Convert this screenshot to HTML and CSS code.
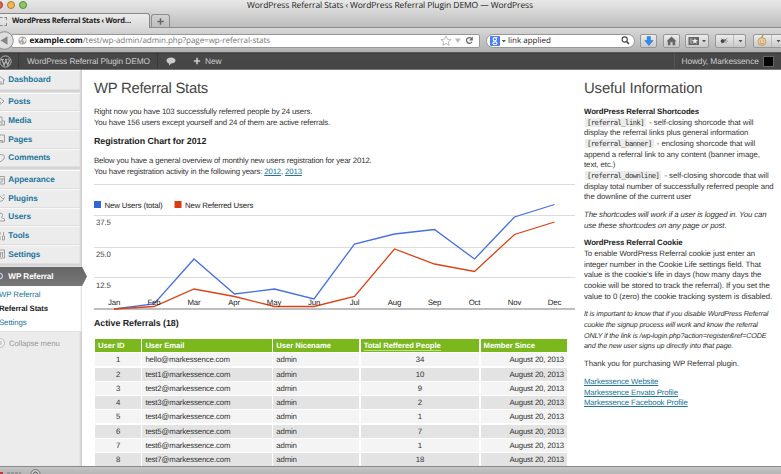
FILE: index.html
```html
<!DOCTYPE html>
<html lang="en">
<head>
<meta charset="utf-8">
<title>WordPress Referral Stats</title>
<link rel="stylesheet" href="styles.css">
</head>
<body>
<div class="window">
  <header class="titlebar">
    <div class="lights"><i class="red"></i><i class="amber"></i><i class="green"></i></div>
    <div class="wintitle"><span>WordPress Referral Stats ‹ WordPress Referral Plugin DEMO — WordPress</span></div>
    <div class="tabs">
      <div class="tab"><i class="favicon"></i><span>WordPress Referral Stats ‹ Word…</span></div>
      <div class="newtab"><svg width="7" height="7" viewBox="0 0 7 7"><path d="M3.5 .3v6.4M.3 3.5h6.4" stroke="#666" stroke-width="1.5"/></svg></div>
    </div>
  </header>
  <nav class="toolbar">
    <div class="back"><svg width="19" height="19" viewBox="0 0 19 19"><circle cx="9.5" cy="9.5" r="8.8" fill="#dedede" stroke="#8b8b8b"/><path d="M5.5 9.5l7-4.2v8.4z" fill="#858585"/></svg></div>
    <div class="url">
      <svg width="9" height="9" viewBox="0 0 9 9"><circle cx="4.5" cy="4.5" r="4.1" fill="#a9a9a9"/><path d="M1 3l2-1.6 1.4.8-1 1.5-.3 1.4-1-.5zM5 3.2l1.6-1.4L8 4 6.6 6.8 5.4 5zM2.5 6l1.6.2L3.8 8z" fill="#eee"/></svg>
      <span class="addr"><b>example.com</b>/test/wp-admin/admin.php?page=wp-referral-stats</span>
      <svg class="urlicons" width="36" height="11" viewBox="0 0 36 11"><path d="M6 .8l1.5 3.4 3.6.3-2.7 2.4.8 3.5L6 8.5l-3.2 1.9.8-3.5L.9 4.5l3.6-.3z" fill="#fff" stroke="#aaa" stroke-width=".8"/><path d="M14.8 3.5h6l-3 4.6z" fill="#bbb"/><path d="M31.3 3.2A2.9 2.9 0 1 0 32 6.8" fill="none" stroke="#666" stroke-width="1.3"/><path d="M32.8 1.6v3.8h-3.8z" fill="#666"/></svg>
    </div>
    <div class="search">
      <svg width="16" height="10" viewBox="0 0 16 10"><rect width="10" height="10" rx="1" fill="#4a7df0"/><ellipse cx="4.8" cy="3.2" rx="1.7" ry="1.6" fill="none" stroke="#fff" stroke-width="1.1"/><path d="M5 1.5h2.3M5 4.8l.9 1" stroke="#fff"/><ellipse cx="4.9" cy="7.3" rx="2.1" ry="1.4" fill="none" stroke="#fff" stroke-width="1.1"/><path d="M11.8 4h4l-2 2.4z" fill="#555"/></svg>
      <span>link applied</span>
      <svg class="lens" width="9" height="9" viewBox="0 0 9 9"><circle cx="3.7" cy="3.5" r="2.6" fill="none" stroke="#444" stroke-width="1.1"/><path d="M5.6 5.4l2.4 2.7" stroke="#444" stroke-width="1.5"/></svg>
    </div>
    <div class="btn b1"><svg width="10" height="10" viewBox="0 0 10 10"><path d="M3.2.6h3.2v4h2.7L4.9 9.4.7 4.6h2.5z" fill="#2f8cf2" stroke="#1c6dd0" stroke-width=".5"/></svg></div>
    <div class="btn b2"><svg width="11" height="10" viewBox="0 0 11 10"><path d="M5.5.6l5 4.6H9.2v4H6.6V6.3H4.4v2.9H1.8v-4H.5z" fill="#666"/></svg></div>
    <div class="btn b3"><svg width="19" height="10" viewBox="0 0 19 10"><rect x=".5" y="1" width="10.5" height="8" fill="#666"/><rect x="2" y="2.2" width="2.3" height="5.5" fill="#999"/><path d="M6.9 2l.9 2 2.1.1-1.6 1.4.5 2.2-1.9-1.2L5 7.7l.5-2.2L4 4.1 6 4z" fill="#eee"/><path d="M14 4h4l-2 2.4z" fill="#555"/></svg></div>
    <div class="btn b4"><svg width="30" height="12" viewBox="0 0 30 12"><path d="M4 6h8M5 3.5l3 2 3.5-2.5M5.5 9l2.5-2.5L11 8" stroke="#999" stroke-width=".8" fill="none"/><circle cx="6.7" cy="6.1" r="1.9" fill="#444"/><circle cx="9.3" cy="5" r="1.1" fill="#777"/><path d="M17.5 0v12" stroke="#b5b5b5" stroke-width=".8"/><path d="M22.5 5h4l-2 2.4z" fill="#555"/></svg></div>
    <div class="btn b5"><svg width="27" height="12" viewBox="0 0 27 12"><circle cx="8" cy="6.6" r="4" fill="#e8cf9d" stroke="#bb9960" stroke-width=".9"/><path d="M8 3V1l1.5-.5" stroke="#a58755" fill="none"/><path d="M6.5 5.5v1.2M9.5 5.5v1.2M6 8.2q2 1.3 4 0" stroke="#a48655" stroke-width=".7" fill="none"/><path d="M17.5 0v12" stroke="#b5b5b5" stroke-width=".8"/><path d="M22.5 5h4l-2 2.4z" fill="#555"/></svg></div>
  </nav>
  <div class="adminbar">
    <div class="wp"><svg width="13" height="13" viewBox="0 0 13 13"><circle cx="6.5" cy="6.5" r="5.6" fill="none" stroke="#b5b5b5"/><path d="M2 4.5h2.8M6 4.5h2.6M3 4.5l2.1 5.8 1.5-4.1M6.6 4.5l2.2 5.8 1.5-4.4q0-1.3-.8-2.2" fill="none" stroke="#b5b5b5" stroke-width="1.2"/></svg></div>
    <div class="site">WordPress Referral Plugin DEMO</div>
    <div class="bubble"><svg width="10" height="9" viewBox="0 0 10 9"><path d="M5 .4c2.6 0 4.5 1.3 4.5 3.1S7.6 6.6 5 6.6L3 8.8V6.4C1.5 6 .5 5 .5 3.5.5 1.7 2.4.4 5 .4z" fill="#ccc"/></svg></div>
    <div class="new"><svg width="8" height="8" viewBox="0 0 8 8"><path d="M4 .8v6.4M.8 4h6.4" stroke="#ccc" stroke-width="1.6"/></svg><span>New</span></div>
    <div class="howdy"><span>Howdy, Markessence</span><i></i></div>
  </div>
  <div class="body">
    <aside class="side">
      <div class="item dash"><svg width="6" height="10" viewBox="0 0 6 10"><path d="M-1 1l5.5 4H3.5v4H-1M1 9V6" class="ic"/></svg><span>Dashboard</span></div>
      <div class="sep"></div>
      <div class="item"><svg width="6" height="10" viewBox="0 0 6 10"><path d="M0 1l4 3-2.500 2.500L0 5M0 6v2" class="ic"/></svg><span>Posts</span></div>
      <div class="item"><svg width="6" height="10" viewBox="0 0 6 10"><path d="M-1 1h3v4h2.500v4H-1M0 6h2v3" class="ic"/></svg><span>Media</span></div>
      <div class="item"><svg width="6" height="10" viewBox="0 0 6 10"><path d="M-1 1h5.500v7H-1M0 6.500h2.500v2.500" class="ic"/></svg><span>Pages</span></div>
      <div class="item"><svg width="6" height="10" viewBox="0 0 6 10"><path d="M-1 1.500h2.500Q4.500 1.500 4.500 4T2 7.500L0 9" class="ic"/></svg><span>Comments</span></div>
      <div class="sep"></div>
      <div class="item"><svg width="6" height="10" viewBox="0 0 6 10"><path d="M-1 1.500h5.500v7.500H-1M0 4h4M2 4v3H0" class="ic"/></svg><span>Appearance</span></div>
      <div class="item"><svg width="6" height="10" viewBox="0 0 6 10"><path d="M4.500 1L2.500 3M5 4L3 6M0 3l3.500 3.500Q2 9 0 8" class="ic"/></svg><span>Plugins</span></div>
      <div class="item"><svg width="6" height="10" viewBox="0 0 6 10"><path d="M0 1Q3 1 2.500 3.500L1.500 5.500 4.500 7v2H-1" class="ic"/></svg><span>Users</span></div>
      <div class="item"><svg width="6" height="10" viewBox="0 0 6 10"><path d="M0 1v3M3.500 1v3.500M2.500 5h2v4h-2zM0 5v4" class="ic"/></svg><span>Tools</span></div>
      <div class="item"><svg width="6" height="10" viewBox="0 0 6 10"><path d="M-1 1h5.500v8H-1M.5 3v5M2.500 3v5M0 4h1.500M2 3.500h1.500" class="ic"/></svg><span>Settings</span></div>
      <div class="sep"></div>
      <div class="current"><svg width="6" height="10" viewBox="0 0 6 10"><circle cx="-.2" cy="5" r="2.600" fill="none" stroke="#c5cdf0" stroke-width="1.200"/></svg><span>WP Referral</span></div>
      <div class="sub"><a>WP Referral</a><b>Referral Stats</b><a>Settings</a></div>
      <div class="collapse"><svg width="6" height="12" viewBox="0 0 6 12"><circle cx="0" cy="6" r="4.500" fill="#f5f5f5" stroke="#bbb"/><path d="M1 4v4" stroke="#aaa"/></svg><span>Collapse menu</span></div>
    </aside>
    <main class="main">
      <h1>WP Referral Stats</h1>
      <p>Right now you have 103 successfully referred people by 24 users.<br>You have 156 users except yourself and 24 of them are active referrals.</p>
      <h2 class="h-chart">Registration Chart for 2012</h2>
      <p>Below you have a general overview of monthly new users registration for year 2012.<br>You have registration activity in the following years: <a>2012</a>, <a>2013</a></p>
      <svg class="chart" width="481" height="132" viewBox="94 180 481 132">
        <g stroke="#dcdcdc"><path d="M94 184.500h481M94 215.500h481M94 247.500h481M94 277.500h481"/></g>
        <path d="M94 309h481" stroke="#a8a8a8" stroke-width="1.500"/>
        <rect x="94" y="201" width="7" height="7" fill="#3366dc"/><rect x="174.500" y="201" width="7" height="7" fill="#dc3912"/>
        <g class="ct"><text x="104.500" y="207.500">New Users (total)</text><text x="185" y="207.500">New Referred Users</text></g>
        <g class="ct ax"><text x="96" y="225">37.5</text><text x="96" y="256.500">25.0</text><text x="96" y="287.500">12.5</text></g>
        <polyline points="114,309 154,304 194,259 234.500,294 274.500,289 314,299 354.500,244 394.500,234 434.500,229.500 474.500,259 514.500,217 554.500,204.500" fill="none" stroke="#4470e0" stroke-width="1.300"/>
        <polyline points="114,309 154,306.500 194,289 234.500,296.500 274.500,306.500 314,306.500 354.500,296.500 394.500,249 434.500,264 474.500,271.500 514.500,234.500 554.500,222" fill="none" stroke="#dc4214" stroke-width="1.300"/>
        <g class="ct mo"><text x="114" y="304.500">Jan</text><text x="154" y="304.500">Feb</text><text x="194" y="304.500">Mar</text><text x="234" y="304.500">Apr</text><text x="274" y="304.500">May</text><text x="314" y="304.500">Jun</text><text x="354.500" y="304.500">Jul</text><text x="394.500" y="304.500">Aug</text><text x="434.500" y="304.500">Sep</text><text x="474.500" y="304.500">Oct</text><text x="514.500" y="304.500">Nov</text><text x="554.500" y="304.500">Dec</text></g>
      </svg>
      <h2 class="h-active">Active Referrals (18)</h2>
      <div class="table">
        <div class="tr th"><span>User ID</span><span>User Email</span><span>User Nicename</span><span><u>Total Reffered People</u></span><span>Member Since</span></div>
        <div class="tr"><span>1</span><span>hello@markessence.com</span><span>admin</span><span>34</span><span>August 20, 2013</span></div>
        <div class="tr"><span>2</span><span>test1@markessence.com</span><span>admin</span><span>10</span><span>August 20, 2013</span></div>
        <div class="tr"><span>3</span><span>test2@markessence.com</span><span>admin</span><span>9</span><span>August 20, 2013</span></div>
        <div class="tr"><span>4</span><span>test3@markessence.com</span><span>admin</span><span>2</span><span>August 20, 2013</span></div>
        <div class="tr"><span>5</span><span>test4@markessence.com</span><span>admin</span><span>1</span><span>August 20, 2013</span></div>
        <div class="tr"><span>6</span><span>test5@markessence.com</span><span>admin</span><span>7</span><span>August 20, 2013</span></div>
        <div class="tr"><span>7</span><span>test6@markessence.com</span><span>admin</span><span>1</span><span>August 20, 2013</span></div>
        <div class="tr"><span>8</span><span>test7@markessence.com</span><span>admin</span><span>18</span><span>August 20, 2013</span></div>
      </div>
    </main>
    <section class="info">
      <h1>Useful Information</h1>
      <p><b>WordPress Referral Shortcodes</b><br><code>[referral_link]</code> - self-closing shorcode that will<br>display the referral links plus general information<br><code>[referral_banner]</code> - enclosing shorcode that will<br>append a referral link to any content (banner image,<br>text, etc.)<br><code>[referral_downline]</code> - self-closing shorcode that will<br>display total number of successfully referred people and<br>the downline of the current user</p>
      <p class="it">The shortcodes will work if a user is logged in. You can<br>use these shortcodes on any page or post.</p>
      <p><b>WordPress Referral Cookie</b><br>To enable WordPress Referral cookie just enter an<br>integer number in the Cookie Life settings field. That<br>value is the cookie's life in days (how many days the<br>cookie will be stored to track the referral). If you set the<br>value to 0 (zero) the cookie tracking system is disabled.</p>
      <p class="it sm">It is important to know that if you disable WordPress Referral<br>cookie the signup process will work and know the referral<br>ONLY if the link is /wp-login.php?action=register&amp;ref=CODE<br>and the new user signs up directly into that page.</p>
      <p>Thank you for purchasing WP Referral plugin.</p>
      <p><a>Markessence Website</a><br><a>Markessence Envato Profile</a><br><a>Markessence Facebook Profile</a></p>
    </section>
  </div>
  <footer class="addon"><svg width="60" height="7" viewBox="0 0 60 7"><path d="M0 6h3" stroke="#c33" stroke-width="2"/><path d="M7 6h14" stroke="#777" stroke-dasharray="3 1"/><circle cx="35.500" cy="7" r="4.500" fill="#ccc" stroke="#777"/><circle cx="35.500" cy="7" r="2" fill="none" stroke="#555"/></svg></footer>
</div>
</body>
</html>
```
FILE: styles.css
```css
* { box-sizing: border-box; }
body { margin: 0; background: #fff; font-family: "Liberation Sans", Arial, sans-serif; font-size: 7.8px; color: #333; text-rendering: geometricPrecision; }
svg { display: block; flex: none; }
h1, h2, p { margin: 0; font-weight: normal; }
.window { width: 781px; height: 474px; overflow: hidden; display: flex; flex-direction: column; white-space: nowrap; }

.titlebar { height: 28px; flex: none; background: linear-gradient(#e8e8e8, #bdbdbd); border-bottom: 1px solid #8d8d8d; display: grid; grid-template-rows: 13px 14px; grid-template-columns: 84px 1fr; }
.lights { display: flex; gap: 4px; padding-top: 1px; margin-left: -5px; }
.lights i { width: 8px; height: 8px; border-radius: 50%; border: 1px solid #777; }
.lights .red { background: #ee5b56; border-color: #a73b37; }
.lights .amber { background: #f5b84e; border-color: #a87c33; }
.lights .green { background: #8cc963; border-color: #568a3b; }
.wintitle { padding-left: 163px; font: 8.5px/11px "Open Sans", sans-serif; letter-spacing: -.09px; color: #222; }
.tabs { grid-column: 1 / 3; display: flex; align-items: flex-end; }
.tab { width: 150px; height: 15px; margin-bottom: -1px; background: linear-gradient(#ececec, #d9d9d9); border: 1px solid #888; border-left: 0; border-bottom: 0; border-radius: 0 3px 0 0; display: flex; align-items: center; gap: 5px; font: bold 7.6px/12px "Open Sans", sans-serif; letter-spacing: -.28px; color: #222; }
.favicon { width: 7px; height: 9px; border: 1px dashed #888; border-left: 0; }
.newtab { width: 19px; height: 13px; margin-left: 1px; background: linear-gradient(#d2d2d2, #bdbdbd); border: 1px solid #8d8d8d; border-bottom: 0; border-radius: 3px 3px 0 0; display: flex; align-items: center; justify-content: center; }

.toolbar { height: 24px; flex: none; background: linear-gradient(#d8d8d8, #b2b2b2); display: flex; align-items: center; padding-top: 1px; }
.back { margin-left: -5px; z-index: 1; }
.url { flex: none; margin-left: -3px; width: 469px; height: 14px; background: #fff; border: 1px solid #979797; border-radius: 2px; display: flex; align-items: center; padding-left: 5.5px; font: 8.1px/12px "Open Sans", sans-serif; letter-spacing: -.08px; color: #777; }
.url b { color: #111; }
.addr { margin-left: 3px; }
.urlicons { margin-left: auto; margin-right: 3px; }
.search { flex: none; margin-left: 6px; width: 149px; height: 14px; background: #fff; border: 1px solid #979797; border-radius: 7px; display: flex; align-items: center; padding: 0 4px 0 3px; font: 8px/12px "Open Sans", sans-serif; color: #222; }
.search span { margin-left: 2px; }
.lens { margin-left: auto; }
.btn { height: 14px; border: 1px solid #979797; border-radius: 2px; background: linear-gradient(#ececec, #c9c9c9); display: flex; align-items: center; justify-content: center; margin-left: 6px; flex: none; }
.b1 { width: 17px; margin-left: 5px; }
.b2 { width: 17px; }
.b3 { width: 24px; margin-left: 5px; }
.b4 { width: 31px; }
.b5 { width: 34px; margin-left: 7px; justify-content: flex-start; }

.adminbar { height: 18px; flex: none; background: linear-gradient(#414141, #484848 3px, #464646 16px, #333 16px); border-bottom: 1px solid #777; border-top: 1px solid #555; display: flex; color: #ccc; font-size: 8.3px; letter-spacing: -.08px; }
.adminbar > div { display: flex; align-items: center; border-right: 1px solid #3a3a3a; }
.wp { width: 19px; }
.wp svg { margin-left: -1px; }
.site { width: 139px; padding-left: 8px; }
.bubble { width: 25px; padding-left: 8px; }
.adminbar .bubble, .adminbar .new { border: 0; }
.adminbar .new { padding-left: 10px; gap: 4px; }
.adminbar .howdy { margin-left: auto; width: 107px; border: 0; border-left: 1px solid #555; padding-left: 6.5px; gap: 4px; }
.howdy i { width: 11px; height: 11px; background: #050505; border: 1px solid #666; }

.body { height: 396px; flex: none; display: flex; }
.side { width: 82px; flex: none; background: linear-gradient(to left, #c8c8c8, #ececec 3px); }
.item { height: 18.7px; display: flex; align-items: center; border-bottom: 1px solid #dedede; border-top: 1px solid #f9f9f9; gap: 2.3px; margin-right: 2px; color: #21759b; font-weight: bold; font-size: 8.2px; letter-spacing: -.03px; }
.dash { height: 19.5px; }
.ic { fill: none; stroke: #999; stroke-width: .9; }
.sep { height: 3px; background: #d5d5d5; border-bottom: 1px solid #e2e2e2; margin-right: 1px; }
.current { width: 87px; height: 19.5px; background: linear-gradient(#666, #777); clip-path: polygon(0 0, 82px 0, 87px 50%, 82px 100%, 0 100%); position: relative; display: flex; align-items: center; gap: 2.3px; color: #fff; font-weight: bold; font-size: 8.2px; letter-spacing: -.1px; }
.sub { height: 44.5px; background: linear-gradient(to left, #d8d8d8, #fff 2px); display: flex; flex-direction: column; padding-top: 2px; line-height: 13.8px; letter-spacing: -.08px; }
.sub a { color: #21759b; margin-left: -1px; }
.sub b { color: #222; margin-left: -1px; letter-spacing: -.12px; }
.collapse { height: 24px; display: flex; align-items: center; gap: 3px; color: #999; border-top: 1px solid #dfdfdf; letter-spacing: -.1px; }

.main { width: 502px; flex: none; padding-left: 12px; letter-spacing: -.145px; }
h1 { height: 37px; padding-top: 10px; font-size: 14.9px; line-height: 18px; color: #464646; letter-spacing: -.29px; }
p { line-height: 10.65px; }
a { color: #21759b; text-decoration: underline; }
.sub a { text-decoration: none; }
h2 { font-weight: bold; font-size: 8.9px; color: #222; line-height: 12px; letter-spacing: -.06px; }
.h-chart { margin-top: 7px; height: 21px; }
.chart { margin-top: 2.4px; }
.ct { font-size: 7.8px; fill: #222; letter-spacing: -.13px; }
.ax { fill: #444; }
.mo { text-anchor: middle; }
.h-active { margin-top: 5px; height: 22px; }
.table { margin-left: 1px; display: flex; flex-direction: column; gap: 1.25px; }
.tr { display: grid; grid-template-columns: 46px 129.5px 86px 118.5px 86.5px; column-gap: 1.4px; height: 13px; line-height: 13px; font-size: 7.8px; letter-spacing: -.15px; }
.tr span { background: #f4f4f4; padding: 0 3px; }
.tr:nth-child(odd) span { background: #e3e3e3; }
.tr span:nth-child(1), .tr span:nth-child(4) { text-align: center; }
.tr span:nth-child(5) { text-align: right; }
.table .th span:nth-child(n) { background: #7ab81e; color: #fff; font-weight: bold; font-size: 7.7px; letter-spacing: -.07px; text-align: left; }
.th u { text-decoration: none; border-bottom: 1px solid #bfe08a; }

.info { letter-spacing: -.06px; }
.info h1 { letter-spacing: -.13px; }
.info p { line-height: 10.65px; margin-bottom: 7.1px; }
.info b { color: #222; letter-spacing: -.09px; }
code { font-family: "DejaVu Sans Mono", monospace; font-size: 7.2px; letter-spacing: -.52px; background: #ececec; padding: 0 2px; margin: 0 1px; line-height: 8px; }
.info .it { font-style: italic; letter-spacing: -.12px; }
.info .sm { font-size: 7.2px; letter-spacing: -.14px; }
.info a { letter-spacing: -.12px; }
.addon { flex: none; height: 8px; background: linear-gradient(#c5c5c5, #b5b5b5); border-top: 1px solid #8a8a8a; }
```
